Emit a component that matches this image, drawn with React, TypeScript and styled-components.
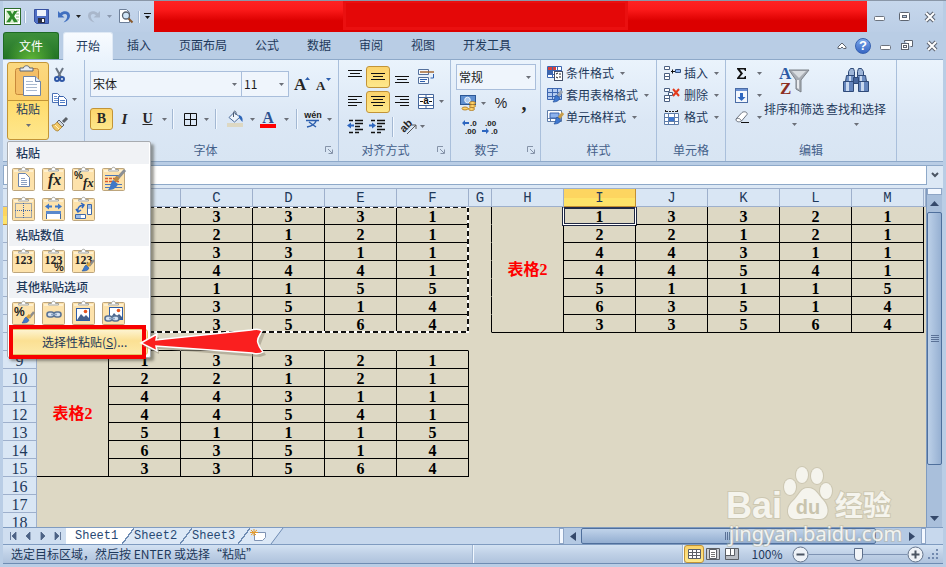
import React from 'react';
import styled, { createGlobalStyle, css } from 'styled-components';

const ui = '"Noto Sans CJK SC", "Noto Sans", sans-serif';
const serif = '"Liberation Serif", "Noto Sans CJK SC", serif';
const mono = '"Liberation Mono", monospace';
const ink = '#1e395b';
const line = '#8ea9c9';

const GlobalStyle = createGlobalStyle`
  *, *::before, *::after { box-sizing: border-box; }
  body { margin: 0; font: 12px/16px ${ui}; color: ${ink}; background: #b9cde5; }
  button, select, input { font: inherit; color: inherit; margin: 0; }
  svg { display: block; flex: none; overflow: visible; }
`;

/* ---------- shared parts ---------- */

const Frame = styled.div`
  display: flex;
  flex-direction: column;
  height: 100vh;
  padding: 0 3px 3px;
  background: #b9cde5;
  border-top: 1px solid #8a97a8;
  overflow: hidden;
`;

const Plain = styled.button<{ $w?: number; $h?: number }>`
  display: flex;
  align-items: center;
  justify-content: center;
  flex: none;
  width: ${(p) => (p.$w ? p.$w + 'px' : 'auto')};
  height: ${(p) => p.$h ?? 22}px;
  padding: 0;
  border: 0;
  background: none;
`;

const Toggle = styled(Plain)<{ $on?: boolean }>`
  border: 1px solid transparent;
  border-radius: 3px;
  ${(p) =>
    p.$on &&
    css`
      border-color: #c29437;
      background: linear-gradient(#fbd36b, #fee88b);
    `}
`;

const Spacer = styled.div`
  flex: 1;
`;

type IconProps = { w: number; h: number; children: React.ReactNode };
const Icon = ({ w, h, children }: IconProps) => (
  <svg width={w} height={h} viewBox={`0 0 ${w} ${h}`} fill="none" aria-hidden="true">
    {children}
  </svg>
);

const Caret = ({ color = '#6b6f78' }: { color?: string }) => (
  <Icon w={5} h={3}>
    <path d="M0 0h5L2.5 3z" fill={color} />
  </Icon>
);

/* ---------- title bar ---------- */

const TitleBar = styled.header`
  display: flex;
  flex: none;
  height: 31px;
  background: linear-gradient(#c6d7ec, #bbcee6);
`;

const QuickAccess = styled.div`
  display: flex;
  align-items: center;
  width: 151px;
  flex: none;
  gap: 3px;
`;

const Divider = styled.i<{ $h?: number }>`
  flex: none;
  width: 2px;
  height: ${(p) => p.$h ?? 20}px;
  border-left: 1px solid #a3b8d3;
  border-right: 1px solid #f2f8ff;
`;

const RedBanner = styled.div`
  display: flex;
  justify-content: center;
  flex: 1;
  padding: 0 0 2px;
  margin-top: -1px;
  background: linear-gradient(#fe2424, #fb1a1a 30%, #dc0000 65%, #dc0000);
`;

const RedPanel = styled.div`
  width: 40%;
  margin-right: 50px;
  background: #e40808;
  border: 3px solid #ea1010;
`;

const WindowButtons = styled.div`
  display: flex;
  align-items: center;
  justify-content: flex-end;
  flex: none;
`;

const ExcelIcon = () => (
  <Icon w={17} h={17}>
    <rect x=".5" y=".5" width="16" height="16" fill="#fff" stroke="#2c6b2a" />
    <path d="M2 2h9v13H2z" fill="#d9efcf" />
    <path d="M12 3h3M12 6h3M12 9h3M12 12h3" stroke="#7fb573" />
    <path d="M2.500 3h4l1.700 3.200L10.200 3h3.300L10 8.300l4 6h-4l-2-3.600L6 14.300H2.200L6.200 8.400z" fill="#2f8a2c" />
  </Icon>
);
const SaveIcon = () => (
  <Icon w={15} h={15}>
    <path d="M.5 .5h14v14H2.500L.5 12.500z" fill="#4f6fc4" stroke="#3650a0" />
    <path d="M3 1h9v6H3z" fill="#eef3fb" />
    <path d="M4 9h7v5H4z" fill="#2b2f45" />
    <path d="M8 10h2v3H8z" fill="#fff" />
  </Icon>
);
const UndoIcon = ({ color }: { color: string }) => (
  <Icon w={14} h={13}>
    <path d="M1 1v6.500h6.500L5 5.200C8 3 11 4 10 7.500 9.500 9.500 8 11 6.500 12.500 10 11.500 13 9 13 5.500 12.500 1 7 0 3.200 3.200z" fill={color} />
  </Icon>
);
const RedoIcon = ({ color }: { color: string }) => (
  <Icon w={14} h={13}>
    <path d="M13 1v6.500H6.500L9 5.200C6 3 3 4 4 7.500 4.500 9.500 6 11 7.500 12.500 4 11.500 1 9 1 5.500 1.500 1 7 0 10.800 3.200z" fill={color} />
  </Icon>
);
const PreviewIcon = () => (
  <Icon w={16} h={15}>
    <path d="M1.500 .5h7l3 3v10h-10z" fill="#fff" stroke="#6d7f99" />
    <circle cx="8" cy="6.500" r="3.500" fill="#cfe4f7" stroke="#56606e" strokeWidth="1.300" />
    <path d="M10.500 9.500l4 4" stroke="#8a5a2c" strokeWidth="2" />
  </Icon>
);
const MinIcon = () => (
  <Icon w={12} h={10}>
    <rect x=".5" y="4.500" width="10" height="4" rx="1" fill="#fff" stroke="#6c737e" />
  </Icon>
);
const MaxIcon = () => (
  <Icon w={12} h={10}>
    <rect x=".5" y=".5" width="10" height="8" rx="1" stroke="#5d6470" fill="#fff" />
    <rect x="3.500" y="3.500" width="4" height="2" stroke="#5d6470" fill="#b9cde5" />
  </Icon>
);
const RestoreIcon = () => (
  <Icon w={12} h={11}>
    <path d="M3.500 .5h8v6h-2M3.500 .5v2" stroke="#5d6470" fill="#fff" />
    <rect x=".5" y="3.500" width="7" height="6" stroke="#5d6470" fill="#fff" />
    <rect x="2.500" y="5.500" width="3" height="2" stroke="#5d6470" />
  </Icon>
);
const CloseIcon = () => (
  <Icon w={12} h={10}>
    <path d="M2 1l8 8M10 1L2 9" stroke="#5d6470" strokeWidth="4" />
    <path d="M2 1l8 8M10 1l-8 8" stroke="#fff" strokeWidth="2" />
  </Icon>
);

/* ---------- tabs ---------- */

const TabRow = styled.nav`
  display: flex;
  flex: none;
  height: 28px;
  border-bottom: 1px solid ${line};
`;

const FileTab = styled.button`
  width: 56px;
  padding: 0 0 1px;
  border: 1px solid #1d6a24;
  border-bottom: 0;
  border-radius: 3px 3px 0 0;
  color: #fff;
  background: radial-gradient(ellipse at 50% 110%, #63ba38, transparent 65%), linear-gradient(#3d8f3b, #227325);
`;

const Tab = styled.button<{ $on?: boolean }>`
  padding: 0 14px 2px;
  border: 0;
  background: none;
  ${(p) =>
    p.$on &&
    css`
      padding: 0 12px 1px;
      margin: 0 0 -1px 4px;
      border: 1px solid #dfe9f5;
      border-bottom: 0;
      border-radius: 3px 3px 0 0;
      background: linear-gradient(#f8fbff, #eaf3fc);
    `}
`;

const HelpBadge = styled.button`
  width: 16px;
  height: 16px;
  margin: 0 8px 0 7px;
  padding: 0;
  border: 1px solid #3560b0;
  border-radius: 50%;
  color: #fff;
  font: bold 13px/13px "Liberation Sans", sans-serif;
  background: linear-gradient(#7ba6ea, #3766c4);
`;

/* ---------- ribbon ---------- */

const Ribbon = styled.section`
  display: flex;
  position: relative;
  flex: none;
  height: 102px;
  border-bottom: 1px solid ${line};
  background: linear-gradient(#eaf3fc, #dbe7f5 60%, #d8e5f3);
`;

const Group = styled.div<{ $w: number }>`
  position: relative;
  display: flex;
  flex-direction: column;
  flex: none;
  width: ${(p) => p.$w}px;
  border-right: 1px solid #a9bfdb;
`;

const GroupLabel = styled.div`
  margin-top: auto;
  height: 19px;
  text-align: center;
  color: #44608a;
`;

const Launcher = styled.button`
  position: absolute;
  right: 5px;
  bottom: 7px;
  padding: 0;
  border: 0;
  background: none;
`;

const Line = styled.div<{ $h?: number; $pad?: string }>`
  display: flex;
  align-items: center;
  flex: none;
  height: ${(p) => p.$h ?? 25}px;
  padding: ${(p) => p.$pad ?? '0 5px'};
`;

const Columns = styled.div<{ $pad: string }>`
  display: flex;
  padding: ${(p) => p.$pad};
`;

const Column = styled.div<{ $w?: number }>`
  display: flex;
  flex-direction: column;
  flex: none;
  width: ${(p) => (p.$w ? p.$w + 'px' : 'auto')};
`;

const Drop = styled.label<{ $w: number; $h: number }>`
  display: flex;
  align-items: center;
  flex: none;
  width: ${(p) => p.$w}px;
  height: ${(p) => p.$h}px;
  padding-right: 4px;
  border: 1px solid #a9bedb;
  background: #eff5fc;
  color: #1d1d1d;
  & + & {
    border-left: 0;
  }
`;

const DropSelect = styled.select`
  flex: 1;
  min-width: 0;
  height: 100%;
  padding: 0 2px;
  border: 0;
  appearance: none;
  background: none;
`;

const PasteButton = styled.button`
  display: flex;
  flex-direction: column;
  align-items: center;
  width: 42px;
  height: 78px;
  padding: 2px 0 0;
  border: 1px solid #c29437;
  border-radius: 3px;
  background: linear-gradient(#fbd981, #fbd06c 37px, #c29437 37px, #c29437 38px, #ffdc6c 38px, #fee78e);
`;

const PasteCaption = styled.span`
  margin: 4px 0 7px;
`;

const Command = styled.button`
  display: flex;
  align-items: center;
  height: 22px;
  padding: 0;
  border: 0;
  background: none;
  white-space: nowrap;
  svg:first-child {
    margin-right: 3px;
  }
  svg:last-child {
    margin: 0 0 0 6px;
  }
`;

const BigCommand = styled.button`
  display: flex;
  flex-direction: column;
  align-items: center;
  width: 65px;
  padding: 3px 0 0;
  border: 0;
  background: none;
  white-space: nowrap;
  gap: 6px;
`;

const Glyph = styled.span<{ $size: number; $style?: string }>`
  font: ${(p) => p.$style ?? 'bold'} ${(p) => p.$size}px/20px ${serif};
  color: #262626;
`;

const Under = styled(Glyph)`
  text-decoration: underline;
`;

const PercentGlyph = styled.span`
  font: 14px/20px "Liberation Sans", sans-serif;
  color: #262626;
`;

const ClipboardBig = () => (
  <Icon w={28} h={32}>
    <rect x="1.500" y="3.500" width="23" height="26" rx="2" fill="#f3be66" stroke="#c8893b" />
    <path d="M6 6V3h3.500c0-3 6-3 6 0H19v3z" fill="#e8ecf2" stroke="#5b6675" />
    <path d="M9.500 11.500h12l5 5v14h-17z" fill="#fff" stroke="#6d84a8" />
    <path d="M21.500 11.500v5h5" fill="#dfe8f5" stroke="#6d84a8" />
    <path d="M12 16.500h7M12 19.500h11M12 22.500h11M12 25.500h11" stroke="#a9b9cf" />
  </Icon>
);
const ScissorsIcon = () => (
  <Icon w={11} h={14}>
    <path d="M2 0l5 9M9 0L4 9" stroke="#6b7684" strokeWidth="2" />
    <ellipse cx="3" cy="11" rx="2" ry="2" stroke="#2f57a6" strokeWidth="2" />
    <ellipse cx="8" cy="11" rx="2" ry="2" stroke="#2f57a6" strokeWidth="2" />
  </Icon>
);
const CopyIcon = () => (
  <Icon w={15} h={13}>
    <path d="M.5 .5h5l2 2v7h-7z" fill="#fff" stroke="#4a70b5" />
    <path d="M2 3.500h3M2 5.500h4M2 7.500h4" stroke="#6d93d0" />
    <path d="M6.500 3.500h5l3 3v6h-8z" fill="#fff" stroke="#3a63ad" />
    <path d="M8 7.500h5M8 9.500h5" stroke="#4f7cc6" />
  </Icon>
);
const PainterIcon = () => (
  <Icon w={16} h={15}>
    <path d="M15 1l-4 4" stroke="#5b6067" strokeWidth="3" />
    <path d="M7 3l5 5-2 2-5-5z" fill="#cfd6de" stroke="#5f6670" />
    <path d="M5 5l5 5-4 4C3 14 1 11 0 8c2 0 4-1 5-3z" fill="#f0c766" stroke="#a87d2c" strokeWidth=".8" />
    <path d="M3 8l4 4" stroke="#fff0c0" />
  </Icon>
);
const BorderIcon = () => (
  <Icon w={13} h={13}>
    <path d="M.5 .5h12v12H.5zM6.500 0v13M0 6.500h13" stroke="#111" />
  </Icon>
);
const FillIcon = () => (
  <Icon w={17} h={16}>
    <path d="M2 6.500L7 1.500l6 4.500-5.500 5z" fill="#eef4fb" stroke="#4d6c99" />
    <path d="M6.500 6V2c0-2.500 2.500-2.500 2.500 0v2" stroke="#4d5b70" />
    <path d="M12 4c3 1 4 3 3.500 7-1.500-1-2-3-3.500-4z" fill="#2e66b8" />
    <path d="M0 12h16v4H0z" fill="#ddd8c3" />
  </Icon>
);
const FontColorIcon = () => (
  <Icon w={16} h={18}>
    <text x="8" y="13" textAnchor="middle" fontFamily="Liberation Serif" fontWeight="bold" fontSize="16" fill="#2d5190">A</text>
    <path d="M0 14h16v4H0z" fill="#f00" />
  </Icon>
);
const PhoneticIcon = () => (
  <Icon w={18} h={18}>
    <text x="9" y="8" textAnchor="middle" fontFamily="Liberation Sans" fontWeight="bold" fontSize="9" fill="#222">wén</text>
    <path d="M2 10.500h13M5 12l7 5M12 11C11 14 8 16 3 17" stroke="#2d5fae" strokeWidth="1.500" />
  </Icon>
);
const GrowFont = ({ up }: { up?: boolean }) => (
  <Icon w={16} h={18}>
    <text x="0" y="15" fontFamily="Liberation Serif" fontWeight="bold" fontSize={up ? 17 : 13} fill="#262626">A</text>
    <path d={up ? 'M11 5l2.500-3L16 5z' : 'M10 3h5l-2.500 3z'} fill="#2d5fae" />
  </Icon>
);

const bars: Record<string, string> = {
  top: 'M0 1.500h14M2 4.500h10M0 7.500h14',
  middle: 'M0 4.500h14M2 7.500h10M0 10.500h14',
  bottom: 'M0 7.500h14M2 10.500h10M0 13.500h14',
  left: 'M0 2.500h14M0 5.500h9M0 8.500h14M0 11.500h9',
  center: 'M0 2.500h14M2 5.500h10M0 8.500h14M2 11.500h10',
  right: 'M0 2.500h14M5 5.500h9M0 8.500h14M5 11.500h9',
};
const Bars = ({ kind }: { kind: string }) => (
  <Icon w={14} h={15}>
    <path d={bars[kind]} stroke="#111" />
  </Icon>
);
const IndentIcon = ({ back }: { back?: boolean }) => (
  <Icon w={16} h={15}>
    <path d="M2 1.500h4M8 1.500h8M8 4.500h8M8 7.500h5M8 10.500h8M2 13.500h4M8 13.500h4" stroke="#111" strokeWidth="1.400" />
    <path d={back ? 'M0 6.500l4-3v2h3v2H4v2z' : 'M7 6.500l-4-3v2H0v2h3v2z'} fill="#2d66c0" />
  </Icon>
);
const WrapIcon = () => (
  <Icon w={17} h={16}>
    <path d="M.5 .5h10v5H.5zM.5 8.500h10v6H.5z" fill="#f5f9fe" stroke="#54709c" />
    <path d="M2 3h14" stroke="#a56a35" strokeWidth="1.500" />
    <path d="M2 10.500h7M2 12.500h5M15.500 5v4h-3" stroke="#2d5fae" />
  </Icon>
);
const MergeIcon = () => (
  <Icon w={17} h={15}>
    <path d="M.5 .5h15v14H.5zM.5 3.500h15M.5 11.500h15M8 0v3M8 12v3" fill="#fff" stroke="#45679c" />
    <text x="8" y="10" textAnchor="middle" fontFamily="Liberation Sans" fontWeight="bold" fontSize="10" fill="#111">a</text>
    <path d="M2 7.500h3M11 7.500h3" stroke="#111" />
  </Icon>
);
const OrientIcon = () => (
  <Icon w={17} h={16}>
    <text x="0" y="11" transform="rotate(-45 5 9)" fontFamily="Liberation Sans" fontWeight="bold" fontSize="11" fill="#222">ab</text>
    <path d="M6 15l9-9M11 6h4v4" stroke="#5a5a5a" />
  </Icon>
);
const CurrencyIcon = () => (
  <Icon w={17} h={16}>
    <rect x=".5" y=".5" width="15" height="9" fill="#5f8fd0" stroke="#2c5796" />
    <circle cx="7.500" cy="5" r="2.800" fill="#a9c8ee" stroke="#fff" strokeWidth=".8" />
    <ellipse cx="12.500" cy="8" rx="3" ry="1.500" fill="#ffd36a" stroke="#a9741c" strokeWidth=".8" />
    <ellipse cx="12.500" cy="11" rx="3" ry="1.500" fill="#ffd36a" stroke="#a9741c" strokeWidth=".8" />
    <ellipse cx="11.500" cy="14" rx="3" ry="1.500" fill="#ffd36a" stroke="#a9741c" strokeWidth=".8" />
    <ellipse cx="5" cy="13.500" rx="3" ry="1.500" fill="#ffd36a" stroke="#a9741c" strokeWidth=".8" />
  </Icon>
);
const DecimalIcon = ({ more }: { more?: boolean }) => (
  <Icon w={16} h={16}>
    <g fontFamily="Liberation Sans" fontWeight="bold" fontSize="8" fill="#222">
      <text x={more ? 8 : 3} y="7">{more ? '.0' : '.00'}</text>
      <text x={more ? 3 : 9} y="15">{more ? '.00' : '.0'}</text>
    </g>
    <path d={more ? 'M0 4l3-3v2h4v2H3v2z' : 'M7 12l-3-3v2H0v2h4v2z'} fill="#2d66c0" />
  </Icon>
);
const GridBase = ({ fill = '#fff' }: { fill?: string }) => (
  <path d="M.5 1.500h14v11H.5zM.5 5.500h14M.5 9.500h14M5.500 1v12M10.500 1v12" fill={fill} stroke="#3c66b0" />
);
const ConditionalIcon = () => (
  <Icon w={16} h={16}>
    <GridBase />
    <path d="M1 2h4v3H1zM6 2h3v3H6z" fill="#d8403a" />
    <path d="M1 6h4v3H1z" fill="#3c66b0" />
    <rect x="7.500" y="6.500" width="8" height="9" fill="#fff" stroke="#44506a" />
    <path d="M9 9l2-1M9 12l2 1M12 9h2M12 12h2" stroke="#222" />
  </Icon>
);
const TableFormatIcon = () => (
  <Icon w={16} h={16}>
    <GridBase fill="#b5cdf2" />
    <path d="M15 4l-4 5" stroke="#9aa3b0" strokeWidth="3" />
    <path d="M9 8l4 3c-1 3-4 4-7 4 2-2 1-5 3-7z" fill="#3f78d0" stroke="#25519b" strokeWidth=".7" />
  </Icon>
);
const CellStyleIcon = () => (
  <Icon w={16} h={16}>
    <path d="M.5 1.500h14v11H.5zM.5 9.500h14M3.500 9v4" fill="#fff" stroke="#5f7da9" />
    <path d="M3 4h9v5H3z" fill="#8db3ee" stroke="#3c66b0" />
    <path d="M16 4l-4 5" stroke="#c79d4a" strokeWidth="3" />
    <path d="M10 8l4 3c-1 3-4 4-7 4 2-2 1-5 3-7z" fill="#3f78d0" stroke="#25519b" strokeWidth=".7" />
  </Icon>
);
const InsertCellIcon = () => (
  <Icon w={17} h={15}>
    <path d="M.5 .5h5v3h-5zM.5 7.500h5v3h-5zM.5 10.500h5v3h-5z" fill="#fff" stroke="#4a5f80" />
    <path d="M7 5.500h4M8.500 3.500v4" stroke="#111" />
    <path d="M11.500 3.500h5v3h-5z" fill="#8db3ee" stroke="#33507e" />
  </Icon>
);
const DeleteCellIcon = () => (
  <Icon w={17} h={15}>
    <path d="M.5 .5h5v3h-5zM.5 7.500h5v3h-5zM.5 10.500h5v3h-5zM4.500 4.500h4v3h-4z" fill="#fff" stroke="#4a5f80" />
    <path d="M9 1l6 7M15 1L9 8" stroke="#e33b1c" strokeWidth="2" />
  </Icon>
);
const FormatCellIcon = () => (
  <Icon w={17} h={15}>
    <path d="M.5 3.500h14v11H.5zM.5 7.500h14M.5 11.500h14M4.500 3v12M10.500 3v12" fill="#fff" stroke="#5f7da9" />
    <path d="M5 7h5v4H5z" fill="#3f78d0" />
    <path d="M1.500 0v3M13.500 0v3M2 1.500h11" stroke="#222" strokeDasharray="2 1" />
  </Icon>
);
const FillDownIcon = () => (
  <Icon w={13} h={15}>
    <rect x=".5" y=".5" width="12" height="14" fill="#f3f7fd" stroke="#4a6ca5" />
    <path d="M1 1h11v2H1z" fill="#6c92d3" />
    <path d="M5 5h3v4h2.500l-4 4-4-4H5z" fill="#2d66c0" />
  </Icon>
);
const EraserIcon = () => (
  <Icon w={13} h={13}>
    <path d="M1 8l6-6.500c2-1.500 6-.5 5 2L6.500 10c-2 1.500-6 1-5.500-2z" fill="#fff" stroke="#6d7480" />
    <path d="M1 8c2-1 4-1 5.500 2" stroke="#6d7480" />
    <path d="M6 11.500h8" stroke="#111" />
  </Icon>
);
const SortIcon = () => (
  <Icon w={31} h={30}>
    <text x="0" y="14" fontFamily="Liberation Serif" fontWeight="bold" fontSize="17" fill="#2c5aa5">A</text>
    <text x="1" y="29" fontFamily="Liberation Serif" fontWeight="bold" fontSize="17" fill="#8c2f22">Z</text>
    <path d="M10 5h20l-8 10v12l-5-3V15z" fill="#a8adb4" stroke="#7b8087" />
    <path d="M13 6h14l-7 7z" fill="#d8dce0" />
    <path d="M18 15h2v9l-2-1z" fill="#e8ebee" />
  </Icon>
);
const BinocularsIcon = () => (
  <Icon w={28} h={30}>
    <g stroke="#2f4a78">
      <path d="M6.500 6.500l2-3h3l1 3v4h-6zM15.500 6.500l1-3h3l2 3v4h-6z" fill="#9db5d8" />
      <path d="M4.500 10.500h8v6h-9zM15.500 10.500h8l1 6h-9z" fill="#6f8fc2" />
      <path d="M11.500 12.500h5v6h-5z" fill="#47669c" />
      <path d="M1.500 16.500h10v10h-10zM16.500 16.500h10v10h-10z" fill="#6485bd" />
    </g>
    <path d="M4 17h3v9H4zM19 17h3v9h-3zM7 11h2v5H7zM18 11h2v5h-2z" fill="#c9d9f0" />
  </Icon>
);
const LauncherIcon = () => (
  <Icon w={8} h={8}>
    <path d="M.5 6V.5H6M3 3l4 4M7.500 3.500v4h-4" stroke="#8593a8" />
  </Icon>
);

/* ---------- paste menu ---------- */

const PasteMenu = styled.div`
  position: absolute;
  z-index: 5;
  left: 4px;
  top: 81px;
  width: 144px;
  height: 217px;
  border: 1px solid #a7abb0;
  border-radius: 2px;
  background: #fff;
  box-shadow: 3px 3px 3px rgba(60, 60, 50, 0.5);
`;

const MenuHeading = styled.h3`
  margin: 0 1px;
  padding: 3px 7px;
  height: 22px;
  font: 500 12px/16px ${ui};
  background: #f0f2f5;
`;

const MenuIcons = styled.div`
  display: grid;
  grid-template-columns: repeat(4, 24px);
  gap: 6px;
  padding: 3px 4px;
`;

const MenuCommand = styled.button`
  display: block;
  width: 138px;
  height: 26px;
  margin: 1px 2px;
  padding: 0 0 0 31px;
  border: 1px solid #e5c365;
  border-radius: 3px;
  text-align: left;
  background: linear-gradient(#fdf3cf, #fbe093 45%, #fce9a9);
`;

const RedOutline = styled.div`
  position: absolute;
  left: 1px;
  top: 183px;
  width: 137px;
  height: 34px;
  border: 4px solid #f80000;
`;

const ArrowOverlay = styled.div`
  position: absolute;
  left: 131px;
  top: 184px;
`;

const ClipCell = ({ children }: { children?: React.ReactNode }) => (
  <Plain $w={24} $h={24} type="button" aria-label="粘贴选项">
    <Icon w={24} h={24}>
      <rect x=".5" y="1.500" width="22" height="22" rx="1" fill="#fde2ab" stroke="#bda57c" />
      <path d="M2 3h19v2H2z" fill="#fef0d0" />
      <path d="M6.500 3.500V2.500h3c0-3 4-3 4 0h3v1.500h-10z" fill="#fff" stroke="#a3a39d" />
      {children}
    </Icon>
  </Plain>
);

const BlueBrush = ({ x, y }: { x: number; y: number }) => (
  <g transform={`translate(${x} ${y})`}>
    <path d="M11 0L6 6" stroke="#8c8c8c" strokeWidth="2.500" />
    <path d="M7 3L4 6" stroke="#d6a23c" strokeWidth="3" />
    <path d="M3 5l3 3c-1 3-4 3-7 3 2-2 2-5 4-6z" fill="#3f78c8" stroke="#2d5a9f" strokeWidth=".6" />
  </g>
);
const Digits = () => (
  <text x="11.500" y="15" textAnchor="middle" fontFamily="Liberation Serif" fontWeight="bold" fontSize="12" fill="#222">123</text>
);
const Chain = ({ x, y }: { x: number; y: number }) => (
  <g transform={`translate(${x} ${y})`} stroke="#5a7394" strokeWidth="1.600">
    <rect x="0" y="0" width="7" height="5" rx="2.500" fill="#d9e4f2" />
    <rect x="7" y="0" width="7" height="5" rx="2.500" fill="#d9e4f2" />
    <path d="M4 2.500h6" stroke="#8ba3c2" />
  </g>
);
const Picture = ({ x, y }: { x: number; y: number }) => (
  <g transform={`translate(${x} ${y})`}>
    <rect x=".5" y=".5" width="13" height="12" fill="#fff" stroke="#2e5da8" />
    <path d="M1 12l4-6 3 3 2-2 3 3v2z" fill="#46618c" />
    <circle cx="9.500" cy="3.500" r="1.800" fill="#e8541e" />
  </g>
);
const fx = { fontFamily: 'Liberation Serif', fontStyle: 'italic', fontWeight: 'bold', fill: '#222' };

/* ---------- formula bar ---------- */

const FormulaRow = styled.div`
  display: flex;
  flex: none;
  height: 23px;
  margin-top: 3px;
  padding-bottom: 3px;
  background: #dce8f5;
  border-top: 1px solid ${line};
`;

const FormulaInput = styled.input`
  flex: 1;
  min-width: 0;
  padding: 0 4px;
  border: 1px solid ${line};
  border-width: 0 1px 1px;
  background: #fff;
`;

/* ---------- sheet ---------- */

const Work = styled.main`
  display: flex;
  flex: 1;
  min-height: 0;
`;

const SheetPane = styled.div`
  flex: 1;
  min-width: 0;
  position: relative;
  overflow: hidden;
  border-top: 1px solid #9eb0cc;
  background: #ddd8c4;
`;

const Grid = styled.table`
  width: 100%;
  table-layout: fixed;
  border-collapse: separate;
  border-spacing: 0;
`;

const Col = styled.col<{ $w?: number }>`
  width: ${(p) => (p.$w ? p.$w + 'px' : 'auto')};
`;

const Head = styled.th<{ $on?: boolean }>`
  height: 18px;
  padding: 2px 0 0;
  border-right: 1px solid #9eb0cc;
  border-bottom: 1px solid #9eb0cc;
  font: 14px/15px ${mono};
  color: ${ink};
  background: #d9e6f4;
  overflow: hidden;
  ${(p) =>
    p.$on &&
    css`
      border-color: #c28f32;
      background: linear-gradient(#fdd560 50%, #fee369 50%);
    `}
`;

const RowHead = styled(Head)`
  font: 16px/15px ${serif};
`;

const Cell = styled.td<{ $r?: boolean; $b?: boolean; $sel?: boolean }>`
  position: relative;
  height: 18px;
  padding: 2px 0 0;
  text-align: center;
  font: bold 16px/15px ${serif};
  color: #000;
  border-right: 1px solid ${(p) => (p.$r ? '#000' : 'transparent')};
  border-bottom: 1px solid ${(p) => (p.$b ? '#000' : 'transparent')};
  ${(p) =>
    p.$sel &&
    css`
      &::after {
        content: '';
        position: absolute;
        inset: 0 -1px -1px -1px;
        border: 1px solid #fff;
        border-top-color: #1f2742;
        outline: 1px solid #1f2742;
        box-shadow: inset 0 0 0 1px #1f2742;
        clip-path: inset(0 -1px -1px -1px);
      }
    `}
`;

const TitleCell = styled(Cell)`
  padding: 0;
  color: #f00;
  font: bold 16px/18px ${serif};
`;

const Ants = styled.div`
  position: absolute;
  left: 34px;
  top: 18px;
  width: 432px;
  height: 126px;
  background:
    repeating-linear-gradient(90deg, #111 0 5px, #fff 5px 8px) 0 0 / 100% 1px no-repeat,
    repeating-linear-gradient(90deg, #111 0 5px, #fff 5px 8px) 0 100% / 100% 2px no-repeat,
    repeating-linear-gradient(#111 0 5px, #fff 5px 8px) 100% 0 / 2px 100% no-repeat;
`;

const VScroll = styled.div`
  display: flex;
  flex-direction: column;
  flex: none;
  width: 16px;
  margin-right: 1px;
  border-left: 1px solid #7f9bc0;
  background: #a9bfdb;
`;

const SplitHandle = styled.div`
  flex: none;
  height: 7px;
  border: 1px solid #8fa6c6;
  background: #f3f8ff;
`;

const VTrack = styled.div`
  flex: 1;
  min-height: 0;
`;

const VThumb = styled.div`
  display: flex;
  align-items: center;
  justify-content: center;
  height: 85%;
  border: 1px solid #4f6f9c;
  border-radius: 2px;
  background: linear-gradient(90deg, #bcd0e8, #96b0d2);
`;

/* ---------- sheet tabs ---------- */

const SheetBar = styled.div`
  display: flex;
  flex: none;
  height: 17px;
  border-top: 1px solid #7f9bc0;
  background: #c7d8ed;
`;

const SheetNav = styled.div`
  display: flex;
  align-items: center;
  width: 63px;
  padding-left: 2px;
  background: #cfdef0;
`;

const SheetTab = styled.button<{ $on?: boolean }>`
  width: ${(p) => (p.$on ? 68 : 58)}px;
  padding: 1px 0 0 ${(p) => (p.$on ? 9 : 0)}px;
  border: 0;
  text-align: left;
  font: 12px/15px ${mono};
  color: #274873;
  background:
    linear-gradient(to bottom right, ${(p) => (p.$on ? '#fff' : '#dce8f6')} 47%, #6f8cb3 47% 54%, #dce8f6 54%) 100% 0 / 12px 100% no-repeat,
    ${(p) => (p.$on ? '#fff' : '#dce8f6')};
`;

const HScroll = styled.div`
  display: flex;
  align-items: stretch;
  flex: 0 1 367px;
  background: #b4c9e3;
`;

const HGrip = styled.div`
  flex: none;
  width: 5px;
  border: 1px solid #8fa6c6;
  background: #f3f8ff;
`;

const HTrack = styled.div`
  flex: 1;
`;

const HThumb = styled.div`
  display: flex;
  align-items: center;
  justify-content: center;
  width: 92%;
  height: 100%;
  border: 1px solid #4f6f9c;
  border-radius: 2px;
  background: linear-gradient(#c0d3ea, #93aed1);
`;

const Corner = styled.div`
  width: 17px;
  background: #c7d8ed;
`;

/* ---------- status bar ---------- */

const StatusBar = styled.footer`
  display: flex;
  align-items: center;
  flex: none;
  height: 20px;
  padding-left: 8px;
  border-top: 1px solid #7f9bc0;
  border-bottom: 1px solid #6f8cb3;
  background: linear-gradient(#d3e2f3, #bfd0e6 50%, #afc3dd);
`;

const StatusText = styled.span`
  flex: 1;
  white-space: nowrap;
`;

const StatusGap = styled.div`
  flex: 0 1 208px;
`;

const Percent = styled.output`
  width: 50px;
  text-align: center;
`;

const Zoom = styled.input`
  width: 98px;
  height: 17px;
  appearance: none;
  background: linear-gradient(#7e93b3, #7e93b3) center / 100% 1px no-repeat;
  &::-webkit-slider-thumb {
    appearance: none;
    width: 9px;
    height: 13px;
    border: 1px solid #5d6f8b;
    border-radius: 1px 1px 5px 5px;
    background: #f1f4f8;
  }
`;

const Round = ({ plus }: { plus?: boolean }) => (
  <Icon w={17} h={17}>
    <circle cx="8.500" cy="8.500" r="7.500" fill="#eef2f7" stroke="#64748c" />
    <path d={plus ? 'M4.500 8.500h8M8.500 4.500v8' : 'M4.500 8.500h8'} stroke="#4b5563" strokeWidth="2" />
  </Icon>
);

const Watermark = styled.div`
  position: absolute;
  z-index: 8;
  right: 48px;
  bottom: 14px;
  pointer-events: none;
`;

/* ---------- data ---------- */

const firstBlock = [
  ['3', '3', '3', '1'],
  ['2', '1', '2', '1'],
  ['3', '3', '1', '1'],
  ['4', '4', '4', '1'],
  ['1', '1', '5', '5'],
  ['3', '5', '1', '4'],
  ['3', '5', '6', '4'],
];
const secondBlock = [
  ['1', '3', '3', '2', '1'],
  ['2', '2', '1', '2', '1'],
  ['4', '4', '3', '1', '1'],
  ['4', '4', '5', '4', '1'],
  ['5', '1', '1', '1', '5'],
  ['6', '3', '5', '1', '4'],
  ['3', '3', '5', '6', '4'],
];
const letters = ['A', 'B', 'C', 'D', 'E', 'F', 'G', 'H', 'I', 'J', 'K', 'L', 'M'];
const rows = Array.from({ length: 18 }, (_, i) => i + 1);
const blanks = (n: number) => Array.from({ length: n }, (_, i) => <Cell key={'x' + i} />);

const RowCells = ({ n }: { n: number }) => {
  if (n <= 7) {
    return (
      <>
        {n === 1 && <TitleCell rowSpan={7} $r $b />}
        <Cell $r $b />
        {firstBlock[n - 1].map((v, i) => (
          <Cell key={i} $r $b>{v}</Cell>
        ))}
        <Cell $r />
        {n === 1 && <TitleCell rowSpan={7} $r $b>表格2</TitleCell>}
        {secondBlock[n - 1].map((v, i) => (
          <Cell key={'s' + i} $r $b $sel={n === 1 && i === 0}>{v}</Cell>
        ))}
        <Cell />
      </>
    );
  }
  if (n === 8) {
    return (
      <>
        {letters.slice(0, 6).map((l) => (
          <Cell key={l} $b />
        ))}
        {blanks(8)}
      </>
    );
  }
  if (n <= 15) {
    return (
      <>
        {n === 9 && <TitleCell rowSpan={7} $r $b>表格2</TitleCell>}
        {secondBlock[n - 9].map((v, i) => (
          <Cell key={i} $r $b>{v}</Cell>
        ))}
        {blanks(8)}
      </>
    );
  }
  return <>{blanks(14)}</>;
};

const tabs = ['开始', '插入', '页面布局', '公式', '数据', '审阅', '视图', '开发工具'];

export default function App() {
  return (
    <Frame>
      <GlobalStyle />
      <TitleBar>
        <QuickAccess>
          <Plain $w={18} type="button" aria-label="Excel"><ExcelIcon /></Plain>
          <Divider $h={12} />
          <Plain $w={25} type="button" aria-label="保存"><SaveIcon /></Plain>
          <Plain $w={14} type="button" aria-label="撤消"><UndoIcon color="#3f6fc0" /></Plain>
          <Plain $w={9} type="button" aria-label="撤消列表"><Caret color="#222" /></Plain>
          <Plain $w={16} type="button" aria-label="恢复"><RedoIcon color="#a9b7cb" /></Plain>
          <Plain $w={9} type="button" aria-label="恢复列表"><Caret color="#8a98ad" /></Plain>
          <Plain $w={18} type="button" aria-label="打印预览"><PreviewIcon /></Plain>
          <Divider $h={12} />
          <Plain $w={8} type="button" aria-label="自定义">
            <Icon w={7} h={7}>
              <path d="M0 .5h7" stroke="#111" />
              <path d="M1 3h5L3.500 6z" fill="#111" />
            </Icon>
          </Plain>
        </QuickAccess>
        <RedBanner><RedPanel /></RedBanner>
        <WindowButtons>
          <Plain $w={26} type="button" aria-label="最小化"><MinIcon /></Plain>
          <Plain $w={24} type="button" aria-label="最大化"><MaxIcon /></Plain>
          <Plain $w={26} type="button" aria-label="关闭"><CloseIcon /></Plain>
        </WindowButtons>
      </TitleBar>

      <TabRow>
        <FileTab type="button">文件</FileTab>
        {tabs.map((t, i) => (
          <Tab key={t} type="button" $on={i === 0}>{t}</Tab>
        ))}
        <Spacer />
        <WindowButtons>
          <Plain $w={12} type="button" aria-label="折叠功能区">
            <Icon w={10} h={8}>
              <path d="M1 6.500V5l4-4 4 4v1.500H6.500L5 5 3.500 6.500z" fill="#fff" stroke="#5d6470" />
            </Icon>
          </Plain>
          <HelpBadge type="button">?</HelpBadge>
          <Plain $w={14} type="button" aria-label="最小化窗口"><MinIcon /></Plain>
          <Plain $w={28} type="button" aria-label="还原窗口"><RestoreIcon /></Plain>
          <Plain $w={22} type="button" aria-label="关闭窗口"><CloseIcon /></Plain>
        </WindowButtons>
      </TabRow>

      <Ribbon>
        <Group $w={82}>
          <Columns $pad="2px 4px">
            <PasteButton type="button">
              <ClipboardBig />
              <PasteCaption>粘贴</PasteCaption>
              <Caret />
            </PasteButton>
            <Column $w={30}>
              <Line $pad="0 0 0 5px"><Plain type="button" aria-label="剪切"><ScissorsIcon /></Plain></Line>
              <Line $pad="0 0 0 3px">
                <Plain type="button" aria-label="复制"><CopyIcon /></Plain>
                <Plain $w={14} type="button" aria-label="复制选项"><Caret /></Plain>
              </Line>
              <Line $pad="0 0 0 3px"><Plain type="button" aria-label="格式刷"><PainterIcon /></Plain></Line>
            </Column>
          </Columns>
        </Group>

        <Group $w={254}>
          <Line $h={48} $pad="0 0 0 5px">
            <Drop $w={152} $h={26}>
              <DropSelect aria-label="字体"><option>宋体</option></DropSelect>
              <Caret />
            </Drop>
            <Drop $w={47} $h={26}>
              <DropSelect aria-label="字号"><option>11</option></DropSelect>
              <Caret />
            </Drop>
            <Plain $w={26} type="button" aria-label="增大字号"><GrowFont up /></Plain>
            <Plain $w={18} type="button" aria-label="减小字号"><GrowFont /></Plain>
          </Line>
          <Line $h={22} $pad="0 0 0 5px">
            <Toggle $on $w={23} type="button"><Glyph $size={14}>B</Glyph></Toggle>
            <Plain $w={23} type="button"><Glyph $size={15} $style="italic bold">I</Glyph></Plain>
            <Plain $w={23} type="button"><Under $size={14}>U</Under></Plain>
            <Plain $w={10} type="button" aria-label="下划线选项"><Caret /></Plain>
            <Plain $w={8} as="span"><Divider /></Plain>
            <Plain $w={26} type="button" aria-label="边框"><BorderIcon /></Plain>
            <Plain $w={6} type="button" aria-label="边框选项"><Caret /></Plain>
            <Plain $w={14} as="span"><Divider /></Plain>
            <Plain $w={25} type="button" aria-label="填充颜色"><FillIcon /></Plain>
            <Plain $w={8} type="button" aria-label="填充选项"><Caret /></Plain>
            <Plain $w={24} type="button" aria-label="字体颜色"><FontColorIcon /></Plain>
            <Plain $w={12} type="button" aria-label="字体颜色选项"><Caret /></Plain>
            <Plain $w={10} as="span"><Divider /></Plain>
            <Plain $w={22} type="button" aria-label="拼音"><PhoneticIcon /></Plain>
            <Plain $w={10} type="button" aria-label="拼音选项"><Caret /></Plain>
          </Line>
          <GroupLabel>字体&emsp;</GroupLabel>
          <Launcher type="button" aria-label="字体设置"><LauncherIcon /></Launcher>
        </Group>

        <Group $w={112}>
          <Columns $pad="4px 4px 0">
            <Column>
              <Line $pad="0">
                <Toggle $w={23} type="button" aria-label="顶端对齐"><Bars kind="top" /></Toggle>
                <Toggle $on $w={24} type="button" aria-label="垂直居中"><Bars kind="middle" /></Toggle>
                <Toggle $w={23} type="button" aria-label="底端对齐"><Bars kind="bottom" /></Toggle>
                <Plain $w={26} type="button" aria-label="自动换行"><WrapIcon /></Plain>
              </Line>
              <Line $pad="0">
                <Toggle $w={23} type="button" aria-label="左对齐"><Bars kind="left" /></Toggle>
                <Toggle $on $w={24} type="button" aria-label="居中"><Bars kind="center" /></Toggle>
                <Toggle $w={23} type="button" aria-label="右对齐"><Bars kind="right" /></Toggle>
                <Plain $w={26} type="button" aria-label="合并"><MergeIcon /></Plain>
                <Plain type="button" aria-label="合并选项"><Caret /></Plain>
              </Line>
              <Line $pad="0">
                <Plain $w={23} type="button" aria-label="减少缩进"><IndentIcon back /></Plain>
                <Plain $w={22} type="button" aria-label="增加缩进"><IndentIcon /></Plain>
                <Plain $w={10} as="span"><Divider /></Plain>
                <Plain $w={22} type="button" aria-label="方向"><OrientIcon /></Plain>
                <Plain type="button" aria-label="方向选项"><Caret /></Plain>
              </Line>
            </Column>
          </Columns>
          <GroupLabel>对齐方式&emsp;&ensp;</GroupLabel>
          <Launcher type="button" aria-label="对齐设置"><LauncherIcon /></Launcher>
        </Group>

        <Group $w={90}>
          <Line $h={32} $pad="2px 5px 0">
            <Drop $w={80} $h={26}>
              <DropSelect aria-label="数字格式"><option>常规</option></DropSelect>
              <Caret />
            </Drop>
          </Line>
          <Line $h={22} $pad="0 8px">
            <Plain $w={18} type="button" aria-label="货币"><CurrencyIcon /></Plain>
            <Plain $w={12} type="button" aria-label="货币选项"><Caret /></Plain>
            <Plain $w={24} type="button"><PercentGlyph>%</PercentGlyph></Plain>
            <Plain $w={22} type="button"><Glyph $size={20}>,</Glyph></Plain>
          </Line>
          <Line $h={25} $pad="0 8px">
            <Plain $w={22} type="button" aria-label="增加小数位"><DecimalIcon more /></Plain>
            <Plain $w={18} type="button" aria-label="减少小数位"><DecimalIcon /></Plain>
          </Line>
          <GroupLabel>数字&emsp;&ensp;</GroupLabel>
          <Launcher type="button" aria-label="数字设置"><LauncherIcon /></Launcher>
        </Group>

        <Group $w={116}>
          <Columns $pad="2px 6px">
            <Column>
              <Command type="button"><ConditionalIcon />条件格式<Caret /></Command>
              <Command type="button"><TableFormatIcon />套用表格格式<Caret /></Command>
              <Command type="button"><CellStyleIcon />单元格样式<Caret /></Command>
            </Column>
          </Columns>
          <GroupLabel>样式</GroupLabel>
        </Group>

        <Group $w={69}>
          <Columns $pad="2px 7px">
            <Column>
              <Command type="button"><InsertCellIcon />插入<Caret /></Command>
              <Command type="button"><DeleteCellIcon />删除<Caret /></Command>
              <Command type="button"><FormatCellIcon />格式<Caret /></Command>
            </Column>
          </Columns>
          <GroupLabel>单元格</GroupLabel>
        </Group>

        <Group $w={171}>
          <Columns $pad="2px 9px">
            <Column $w={28}>
              <Command type="button" aria-label="求和">
                <Icon w={13} h={13}>
                  <path d="M2 1h9v3h-1L9 2.500H5L8 6.500 4.500 10.500H9L10 9h1v3H2v-1l3.500-4.500L2 2z" fill="#111" />
                </Icon>
                <Caret />
              </Command>
              <Command type="button" aria-label="填充"><FillDownIcon /><Caret /></Command>
              <Command type="button" aria-label="清除"><EraserIcon /><Caret /></Command>
            </Column>
            <BigCommand type="button"><SortIcon />排序和筛选<Caret /></BigCommand>
            <BigCommand type="button"><BinocularsIcon />查找和选择<Caret /></BigCommand>
          </Columns>
          <GroupLabel>编辑</GroupLabel>
        </Group>

        <PasteMenu role="menu">
          <MenuHeading>粘贴</MenuHeading>
          <MenuIcons>
            <ClipCell>
              <path d="M6.500 6.500h7l4 4v9h-11z" fill="#fff" stroke="#6b84ad" />
              <path d="M9 11.500h4M9 13.500h6M9 15.500h6M9 17.500h6" stroke="#8ba0c2" />
            </ClipCell>
            <ClipCell><text x="6" y="18" fontSize="16" {...fx}>fx</text></ClipCell>
            <ClipCell>
              <text x="2" y="12" fontSize="10" fontWeight="bold" fontFamily="Liberation Sans" fill="#222">%</text>
              <text x="11" y="20" fontSize="13" {...fx}>fx</text>
            </ClipCell>
            <ClipCell>
              <path d="M3 8.500h17M3 17.500h17M3 20.500h17" stroke="#4b76b8" />
              <path d="M3 11.500h14M3 14.500h14" stroke="#d95a2b" strokeWidth="1.500" strokeDasharray="3 1" />
              <path d="M23 3l-8 9" stroke="#8b8f94" strokeWidth="3" />
              <path d="M16 10l-3 4" stroke="#b98a45" strokeWidth="4" />
              <path d="M11 13l5 4c-2 5-6 6-10 6 3-3 2-7 5-10z" fill="#3f78c8" />
            </ClipCell>
            <ClipCell>
              <path d="M3.500 6.500h16v14h-16zM3 13.500h17M11.500 6v15" stroke="#3f68a8" strokeDasharray="1 1" />
            </ClipCell>
            <ClipCell>
              <path d="M3 9.500l4-3v2h3v2H7v2zM20 9.500l-4-3v2h-3v2h3v2z" fill="#3f78c8" />
              <path d="M4.500 22V14.500h14V22" fill="#fff" stroke="#3f68a8" />
              <path d="M4 14h15v3H4z" fill="#5b89cc" />
            </ClipCell>
            <ClipCell>
              <path d="M15.500 7.500h4v10h-4zM3.500 17.500h10v4h-10z" fill="#fff" stroke="#3f68a8" />
              <path d="M16 8h3v4h-3zM4 18h5v3H4z" fill="#9dbde8" />
              <path d="M6 15c-1-4 1-6 5-7M4 12l2 3 3-2M9 6l3 2-2 3" stroke="#2d66c0" strokeWidth="1.500" />
            </ClipCell>
          </MenuIcons>
          <MenuHeading>粘贴数值</MenuHeading>
          <MenuIcons>
            <ClipCell><Digits /></ClipCell>
            <ClipCell>
              <Digits />
              <text x="12" y="22" fontSize="11" fontWeight="bold" fontFamily="Liberation Sans" fill="#222">%</text>
            </ClipCell>
            <ClipCell><Digits /><BlueBrush x={11} y={11} /></ClipCell>
          </MenuIcons>
          <MenuHeading>其他粘贴选项</MenuHeading>
          <MenuIcons>
            <ClipCell>
              <text x="2" y="15" fontSize="12" fontWeight="bold" fontFamily="Liberation Sans" fill="#222">%</text>
              <BlueBrush x={11} y={11} />
            </ClipCell>
            <ClipCell><Chain x={5} y={11} /></ClipCell>
            <ClipCell><Picture x={4} y={7} /></ClipCell>
            <ClipCell><Picture x={7} y={6} /><Chain x={3} y={15} /></ClipCell>
          </MenuIcons>
          <MenuCommand type="button" role="menuitem">选择性粘贴(<u>S</u>)...</MenuCommand>
          <RedOutline />
          <ArrowOverlay>
            <Icon w={128} h={34}>
              <path d="M2 17L18 8v5L114 4l10 0-5 13 6 9-6 2-101-8v5z" transform="translate(2 3)" fill="#9c9684" opacity=".6" />
              <path d="M2 17L18 8l-1 6L112 4c4-1 9-1 11 1-2 4-6 8-4 12 1 4 3 6 5 9-3 2-7 2-11 1L17 20l1 5z" fill="#fa1f1f" stroke="#fff" strokeWidth="1.500" />
            </Icon>
          </ArrowOverlay>
        </PasteMenu>
      </Ribbon>

      <FormulaRow>
        <FormulaInput aria-label="编辑栏" />
        <Plain $w={16} $h={18} type="button" aria-label="展开编辑栏">
          <Icon w={8} h={6}>
            <path d="M1 1l3 3 3-3" stroke="#4b5563" strokeWidth="2" />
          </Icon>
        </Plain>
      </FormulaRow>

      <Work>
        <SheetPane>
          <Grid>
            <colgroup>
              <Col $w={34} />
              {letters.map((l) => (
                <Col key={l} $w={l === 'G' ? 23 : 72} />
              ))}
              <Col />
            </colgroup>
            <thead>
              <tr>
                <Head />
                {letters.map((l) => (
                  <Head key={l} $on={l === 'I'}>{l === 'A' || l === 'B' ? '' : l}</Head>
                ))}
                <Head />
              </tr>
            </thead>
            <tbody>
              {rows.map((n) => (
                <tr key={n}>
                  <RowHead $on={n === 1}>{n > 8 ? n : ''}</RowHead>
                  <RowCells n={n} />
                </tr>
              ))}
            </tbody>
          </Grid>
          <Ants />
        </SheetPane>
        <VScroll>
          <SplitHandle />
          <Plain $h={17} type="button" aria-label="向上滚动">
            <Icon w={9} h={5}><path d="M0 5l4.500-5L9 5z" fill="#35496b" /></Icon>
          </Plain>
          <VTrack>
            <VThumb>
              <Icon w={8} h={8}><path d="M0 .5h8M0 2.500h8M0 4.500h8M0 6.500h8" stroke="#5a7196" /></Icon>
            </VThumb>
          </VTrack>
          <Plain $h={17} type="button" aria-label="向下滚动">
            <Icon w={9} h={5}><path d="M0 0h9L4.500 5z" fill="#35496b" /></Icon>
          </Plain>
        </VScroll>
      </Work>

      <SheetBar>
        <SheetNav>
          {['M1.500 0v8M7 0v8L3 4z', 'M6 0v8L2 4z', 'M2 0v8l4-4z', 'M1 0v8l4-4zM6.500 0v8'].map((d) => (
            <Plain key={d} $w={15} $h={16} type="button" aria-label="工作表导航">
              <Icon w={8} h={8}><path d={d} fill="#4c6285" stroke="#4c6285" strokeWidth=".8" /></Icon>
            </Plain>
          ))}
        </SheetNav>
        {['Sheet1', 'Sheet2', 'Sheet3'].map((s, i) => (
          <SheetTab key={s} type="button" $on={i === 0}>{s}</SheetTab>
        ))}
        <Plain $w={33} $h={16} type="button" aria-label="插入工作表">
          <Icon w={33} h={16}>
            <path d="M0 0h33L21 16H0z" fill="#dce8f6" />
            <path d="M21 16L33 0" stroke="#6f8cb3" />
            <path d="M4.500 4.500h11v5l-3 3h-8z" fill="#fff" stroke="#7f93b3" />
            <path d="M4 1v7M0 4.500h8M1 2l5 5M7 2L1 7" stroke="#e39a2c" />
          </Icon>
        </Plain>
        <Spacer />
        <HScroll>
          <HGrip />
          <Plain $w={17} $h={16} type="button" aria-label="向左滚动">
            <Icon w={6} h={9}><path d="M6 0v9L0 4.500z" fill="#35496b" /></Icon>
          </Plain>
          <HTrack>
            <HThumb>
              <Icon w={8} h={8}><path d="M.5 0v8M2.500 0v8M4.500 0v8M6.500 0v8" stroke="#5a7196" /></Icon>
            </HThumb>
          </HTrack>
          <Plain $w={19} $h={16} type="button" aria-label="向右滚动">
            <Icon w={6} h={9}><path d="M0 0v9l6-4.500z" fill="#35496b" /></Icon>
          </Plain>
          <HGrip />
        </HScroll>
        <Corner />
      </SheetBar>

      <StatusBar>
        <StatusText>选定目标区域，然后按 ENTER 或选择“粘贴”</StatusText>
        <Divider $h={18} />
        <StatusGap />
        <Divider $h={18} />
        <Toggle $on $w={20} $h={18} type="button" aria-label="普通视图">
          <Icon w={13} h={10}><path d="M.5 .5h12v9H.5zM0 3.500h13M0 6.500h13M4.500 0v10M8.500 0v10" fill="#fff" stroke="#5b5f66" /></Icon>
        </Toggle>
        <Plain $w={18} $h={18} type="button" aria-label="页面布局视图">
          <Icon w={14} h={12}><path d="M.5 .5h13v11H.5z" fill="#c9ccd1" stroke="#5b5f66" /><path d="M3.500 1.500h7v9h-7z" fill="#fff" stroke="#5b5f66" /><path d="M5 4.500h4M5 6.500h4M5 8.500h4" stroke="#777" /></Icon>
        </Plain>
        <Plain $w={20} $h={18} type="button" aria-label="分页预览">
          <Icon w={14} h={12}><path d="M.5 .5h13v11H.5z" fill="#b9bdc4" stroke="#5b5f66" /><path d="M1 1h4v6H1zM6 1h3v6H6z" fill="#fff" /><path d="M5.500 0v7.500H0M9.500 0v7.500H5" stroke="#5b5f66" /></Icon>
        </Plain>
        <Percent>100%</Percent>
        <Plain $w={17} $h={18} type="button" aria-label="缩小"><Round /></Plain>
        <Zoom type="range" min={0} max={100} defaultValue={50} aria-label="显示比例" />
        <Plain $w={17} $h={18} type="button" aria-label="放大"><Round plus /></Plain>
        <Plain $w={19} $h={18} as="span">
          <Icon w={11} h={11}>
            <path d="M8 0h2v2H8zM8 4h2v2H8zM4 4h2v2H4zM8 8h2v2H8zM4 8h2v2H4zM0 8h2v2H0z" fill="#7189ae" />
          </Icon>
        </Plain>
      </StatusBar>

      <Watermark>
        <Icon w={172} h={88}>
          <g fill="#f8f7f1" stroke="#b9b49d" strokeWidth="2" strokeOpacity=".5" paintOrder="stroke" opacity=".92">
            <text x="0" y="53" fontFamily="Liberation Sans" fontWeight="bold" fontSize="36">Bai</text>
            <ellipse cx="64" cy="22" rx="6" ry="8" />
            <ellipse cx="76" cy="10" rx="6" ry="8" />
            <ellipse cx="91" cy="11" rx="6" ry="8" />
            <ellipse cx="100" cy="26" rx="6" ry="8" />
            <path d="M82 23c8 0 10 7 15 12 6 6 7 18-3 19-5 .5-8-1-12-1s-8 1.500-13 1c-9-1-9-12-2-18 6-5 7-13 15-13z" />
            <text x="109" y="51" fontFamily="Noto Sans CJK SC" fontWeight="bold" fontSize="28">经验</text>
            <text x="3" y="76" fontFamily="Noto Sans" fontSize="20">jingyan.baidu.com</text>
          </g>
          <text x="82" y="49" textAnchor="middle" fontFamily="Liberation Sans" fontWeight="bold" fontSize="20" fill="#c9c4ae">du</text>
        </Icon>
      </Watermark>
    </Frame>
  );
}
